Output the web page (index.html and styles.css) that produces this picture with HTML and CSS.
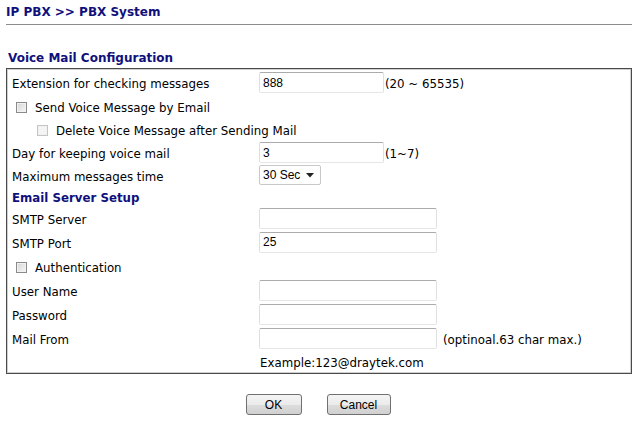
FILE: index.html
```html
<!DOCTYPE html>
<html lang="en">
    <head>
        <meta charset="UTF-8">
        <meta name="viewport" content="width=device-width, initial-scale=1.0">
        <title>IP PBX >> PBX System</title>

        <link rel="stylesheet" href="styles.css">
    </head>
    <body>
        <div class="page">
            <h1 class="crumb">IP PBX &gt;&gt; PBX System</h1>
            <hr class="rule">

            <h2 class="section">Voice Mail Configuration</h2>
            <div class="panel">
                <div class="label">Extension for checking messages</div>
                <div class="field"><input class="text" type="text" value="888"><span class="hint">(20 ~ 65535)</span></div>

                <div class="check wide"><span class="box"></span><span class="hint">Send Voice Message by Email</span></div>

                <div class="check wide sub"><span class="box off"></span><span class="hint">Delete Voice Message after Sending Mail</span></div>

                <div class="label">Day for keeping voice mail</div>
                <div class="field"><input class="text" type="text" value="3"><span class="hint">(1~7)</span></div>

                <div class="label">Maximum messages time</div>
                <div class="field">
                    <div class="select">30 Sec
                        <svg width="8" height="5" viewBox="0 0 8 5"><path d="M0 0h8L4 4.5z" fill="#222"/></svg>
                    </div>
                </div>

                <div class="label strong wide">Email Server Setup</div>

                <div class="label">SMTP Server</div>
                <div class="field"><input class="text long" type="text" value=""></div>

                <div class="label">SMTP Port</div>
                <div class="field"><input class="text long" type="text" value="25"></div>

                <div class="check wide"><span class="box"></span><span class="hint">Authentication</span></div>

                <div class="label">User Name</div>
                <div class="field"><input class="text long" type="text" value=""></div>

                <div class="label">Password</div>
                <div class="field"><input class="text long" type="password" value=""></div>

                <div class="label">Mail From</div>
                <div class="field"><input class="text long" type="text" value=""><span class="hint gap">(optinoal.63 char max.)</span></div>

                <div class="label"></div>
                <div class="field"><span class="hint">Example:123@draytek.com</span></div>
            </div>

            <div class="actions">
                <button class="btn ok">OK</button>
                <button class="btn cancel">Cancel</button>
            </div>
        </div>
    </body>
</html>
```

FILE: styles.css
```css
* {
    box-sizing: border-box;
}

body {
    margin: 0;
    font-family: "DejaVu Sans", Verdana, sans-serif;
    font-size: 11.8px;
    color: #000;
    background: #fff;
}

.page {
    padding: 0 8px 0 6px;
}

.crumb {
    margin: 0;
    padding-top: 5px;
    height: 24px;
    font-size: 12px;
    font-weight: bold;
    color: #10107c;
}
.rule {
    margin: 0;
    border: 0;
    border-top: 1px solid #8c8c8c;
}

.section {
    margin: 0;
    padding: 26px 0 0 2px;
    height: 43px;
    font-size: 12px;
    font-weight: bold;
    color: #10107c;
}

.panel {
    display: grid;
    grid-template-columns: 251px 1fr;
    grid-template-rows: 25px 23px 23px 23px 22px 21px 23px 24px 25px 23px 24px 24px 22px;
    border: 1px solid #4a4a4a;
    box-shadow: inset 0 0 0 1px #cfcfcf;
    padding: 1px;
}
.panel > div {
    display: flex;
    align-items: center;
}
.label {
    padding: 3px 0 0 4px;
}
.wide {
    grid-column: 1 / 3;
}
.strong {
    font-weight: bold;
    color: #10107c;
}
.check {
    padding-left: 8px;
}
.check.sub {
    padding-left: 29px;
}
.box {
    width: 11px;
    height: 11px;
    margin: 1px 8px 0 0;
    border: 1px solid #8a8a8a;
    background: linear-gradient(135deg, #d6d6d6, #f6f6f6);
    box-shadow: inset 0 0 0 1px #f2f2f2;
}
.box.off {
    border-color: #c4c4c4;
    background: #f4f4f4;
}

.text {
    width: 125px;
    height: 21px;
    margin: 0;
    padding: 0 3px;
    font-family: "Liberation Sans", Arial, sans-serif;
    font-size: 12px;
    border: 1px solid;
    border-color: #ababab #e0e0e0 #e6e6e6 #dedede;
    border-radius: 2px;
    outline: none;
}
.text.long {
    width: 178px;
}
.hint {
    padding: 3px 0 0 1px;
}
.hint.gap {
    padding-left: 6px;
}
.check .hint {
    padding-left: 0;
}

.select {
    display: flex;
    align-items: center;
    justify-content: space-between;
    width: 62px;
    height: 20px;
    padding: 0 6px 0 3px;
    font-family: "Liberation Sans", Arial, sans-serif;
    font-size: 12px;
    border: 1px solid #c8c8c8;
    border-radius: 2px;
}

.actions {
    display: flex;
    justify-content: center;
    gap: 25px;
    padding: 20px 2px 0 0;
}
.btn {
    height: 21px;
    padding: 0;
    font-family: "Liberation Sans", Arial, sans-serif;
    font-size: 12px;
    color: #000;
    border: 1px solid #707070;
    border-radius: 3px;
    background: linear-gradient(#f4f4f4, #ebebeb 50%, #dddddd 51%, #d0d0d0);
}
.btn.ok {
    width: 56px;
}
.btn.cancel {
    width: 64px;
}
```
